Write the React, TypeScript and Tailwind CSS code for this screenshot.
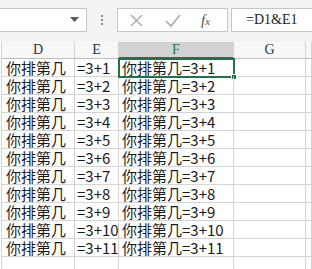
import React from "react";

const rows = Array.from({ length: 11 }, (_, i) => i + 1);

const cellFont = {
  fontFamily: '"Noto Sans CJK SC", "Liberation Sans", sans-serif'
};

const App: React.FC = () => {
  return (
    <div className="w-[312px] h-[269px] overflow-hidden bg-white">
      {/* formula bar */}
      <div className="h-[42px] bg-[#f3f3f3] flex items-start pt-[8px]">
        <div className="w-[87px] h-[24px] bg-white border border-[#c6c6c6] border-l-0 flex items-center justify-end pr-[7px]">
          <svg width="9" height="6" viewBox="0 0 9 6">
            <path d="M0 0 L9 0 L4.5 5 Z" fill="#5a5a5a" />
          </svg>
        </div>
        <div className="w-[30px] h-[24px] flex flex-col items-center justify-center gap-[2px]">
          <div className="w-[2px] h-[2px] bg-[#8a8a8a]" />
          <div className="w-[2px] h-[2px] bg-[#8a8a8a]" />
          <div className="w-[2px] h-[2px] bg-[#8a8a8a]" />
        </div>
        <div className="w-[111px] h-[24px] bg-white border border-[#c6c6c6] flex items-center">
          <svg className="ml-[12px]" width="13" height="13" viewBox="0 0 13 13">
            <path d="M1 1 L12 12 M12 1 L1 12" stroke="#a8a8a8" strokeWidth="1.4" />
          </svg>
          <svg className="ml-[22px]" width="16" height="13" viewBox="0 0 16 13">
            <path d="M1 7 L6 12 L15 1" stroke="#a8a8a8" strokeWidth="1.6" fill="none" />
          </svg>
          <span
            className="ml-[20px] text-[15px] leading-none italic text-[#555]"
            style={{ fontFamily: '"Liberation Serif", serif' }}
          >
            f<span className="text-[11px]">x</span>
          </span>
        </div>
        <div className="ml-[3px] flex-1 h-[24px] bg-white border border-[#c6c6c6] border-r-0 flex items-center pl-[14px]">
          <span
            className="text-[14px] leading-none text-[#222]"
            style={{ fontFamily: '"Liberation Serif", "Noto Sans CJK SC", serif' }}
          >
            =D1&amp;E1
          </span>
        </div>
      </div>

      {/* sheet */}
      <div className="grid grid-cols-[73px_44px_115px_72px_1fr] border-l border-[#d4d4d4] ml-[1px]">
        {["D", "E", "F", "G", ""].map((c) => (
          <div
            key={c || "h"}
            className={`h-[17px] flex items-center justify-center text-[14px] leading-none border-r border-[#d4d4d4] ${
              c === "F"
                ? "bg-[#d2d2d2] text-[#217346] border-b-2 border-b-[#217346]"
                : "bg-[#f7f7f7] text-[#333] border-b border-b-[#bdbdbd]"
            }`}
            style={{ fontFamily: '"Liberation Serif", serif' }}
          >
            {c}
          </div>
        ))}
        {rows.map((n) => (
          <React.Fragment key={n}>
            <div
              className="h-[18px] flex items-center pl-[4px] text-[15px] leading-[17px] text-[#1a1a1a] border-r border-b border-[#d4d4d4] whitespace-nowrap"
              style={cellFont}
            >
              你排第几
            </div>
            <div
              className="h-[18px] flex items-center pl-[2px] text-[15px] leading-[17px] text-[#1a1a1a] border-r border-b border-[#d4d4d4] whitespace-nowrap"
              style={cellFont}
            >
              =3+{n}
            </div>
            <div
              className={`relative h-[18px] flex items-center pl-[3px] text-[15px] leading-[17px] text-[#1a1a1a] border-r border-b border-[#d4d4d4] whitespace-nowrap ${
                n === 1 ? "outline-2 outline-[#217346] -outline-offset-1" : ""
              }`}
              style={cellFont}
            >
              你排第几={"3+" + n}
              {n === 1 && (
                <div className="absolute right-[-4px] bottom-[-4px] w-[6px] h-[6px] bg-[#217346] border border-white" />
              )}
            </div>
            <div className="h-[18px] border-r border-b border-[#d4d4d4]" />
            <div className="h-[18px] border-r border-b border-[#d4d4d4]" />
          </React.Fragment>
        ))}
        {[0, 1, 2, 3, 4].map((i) => (
          <div key={i} className="h-[18px] border-r border-b border-[#d4d4d4]" />
        ))}
      </div>
    </div>
  );
};

export default App;
